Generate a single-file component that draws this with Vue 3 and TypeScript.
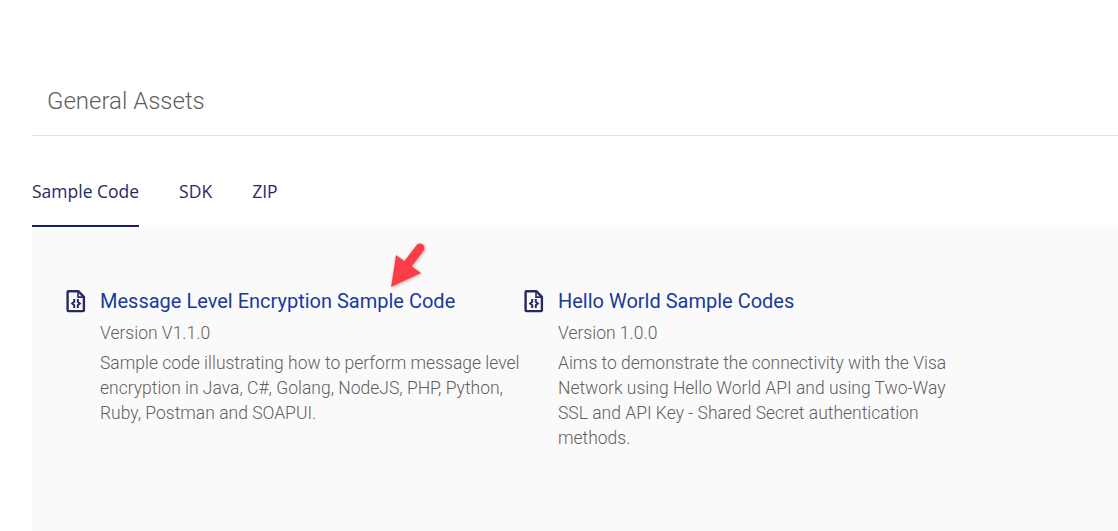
<script setup lang="ts">
interface Asset {
  title: string
  version: string
  lines: string[]
}

const tabs = ['Sample Code', 'SDK', 'ZIP']

const assets: Asset[] = [
  {
    title: 'Message Level Encryption Sample Code',
    version: 'Version V1.1.0',
    lines: [
      'Sample code illustrating how to perform message level',
      'encryption in Java, C#, Golang, NodeJS, PHP, Python,',
      'Ruby, Postman and SOAPUI.'
    ]
  },
  {
    title: 'Hello World Sample Codes',
    version: 'Version 1.0.0',
    lines: [
      'Aims to demonstrate the connectivity with the Visa',
      'Network using Hello World API and using Two-Way',
      'SSL and API Key - Shared Secret authentication',
      'methods.'
    ]
  }
]
</script>

<template>
  <div class="page">
    <h2 class="heading">General Assets</h2>
    <div class="tabs">
      <div v-for="(tab, i) in tabs" :key="tab" class="tab" :class="{ active: i === 0 }">{{ tab }}</div>
    </div>
    <div class="panel">
      <div v-for="asset in assets" :key="asset.title" class="asset">
        <svg class="icon" width="20" height="24" viewBox="0 0 20 24" fill="none">
          <path d="M2.5 2.2h9.8l5.6 5.6v13.4a.9.9 0 0 1-.9.9H2.5a.9.9 0 0 1-.9-.9V3.1a.9.9 0 0 1 .9-.9z" stroke="#2a2a63" stroke-width="2.4" stroke-linejoin="round"/>
          <path d="M12 2.2v5.9h5.9" stroke="#2a2a63" stroke-width="1.6"/>
          <path d="M8.2 10v2.8l-2 1.7 2 1.7v2.8M11.8 10v2.8l2 1.7-2 1.7v2.8" stroke="#2a2a63" stroke-width="2"/>
        </svg>
        <div class="body">
          <a class="title">{{ asset.title }}</a>
          <div class="version">{{ asset.version }}</div>
          <div class="desc">
            <div v-for="line in asset.lines" :key="line">{{ line }}</div>
          </div>
        </div>
      </div>
      <svg class="arrow" width="48" height="54" viewBox="0 0 48 54">
        <defs>
          <filter id="sh" x="-30%" y="-30%" width="160%" height="160%">
            <feDropShadow dx="1" dy="1" stdDeviation="1.5" flood-color="#000" flood-opacity="0.3"/>
          </filter>
        </defs>
        <g filter="url(#sh)">
          <path d="M34 9 L21 26" stroke="#fb3d46" stroke-width="9" stroke-linecap="round"/>
          <path d="M5 48 L10 16 L35 34 Z" fill="#fb3d46"/>
        </g>
      </svg>
    </div>
  </div>
</template>

<style scoped>
.page {
  width: 1118px;
  height: 531px;
  overflow: hidden;
  background: #fff;
  font-family: Roboto, "Liberation Sans", sans-serif;
  padding-top: 85px;
  padding-left: 32px;
  box-sizing: border-box;
}
.heading {
  margin: 0;
  padding-left: 15px;
  height: 50px;
  border-bottom: 1px solid #e1e1e1;
  font-size: 24px;
  line-height: 32px;
  font-weight: 300;
  color: #5f5f5f;
}
.tabs {
  display: flex;
  gap: 40px;
  height: 91px;
  box-sizing: border-box;
  padding-top: 43px;
}
.tab {
  font-family: "Open Sans", sans-serif;
  font-size: 17.5px;
  line-height: 24px;
  color: #2a2a63;
  height: 48px;
  box-sizing: border-box;
}
.tab.active {
  border-bottom: 2px solid #1a1f71;
}
.panel {
  position: relative;
  background: #fafafa;
  height: 304px;
  display: flex;
  padding: 60px 0 0 34px;
  box-sizing: border-box;
}
.asset {
  display: flex;
  width: 458px;
}
.icon {
  flex: none;
  margin: 2px 14px 0 0;
}
.body {
  width: 430px;
}
.title {
  display: block;
  font-size: 20px;
  line-height: 28px;
  color: #1a3a9c;
}
.version {
  margin-top: 4px;
  font-size: 17.5px;
  line-height: 28px;
  font-weight: 300;
  color: #5f5f5f;
}
.desc {
  margin-top: 4px;
  font-size: 17.5px;
  line-height: 25px;
  font-weight: 300;
  color: #5f5f5f;
}
.arrow {
  position: absolute;
  left: 354px;
  top: 12px;
}
</style>
